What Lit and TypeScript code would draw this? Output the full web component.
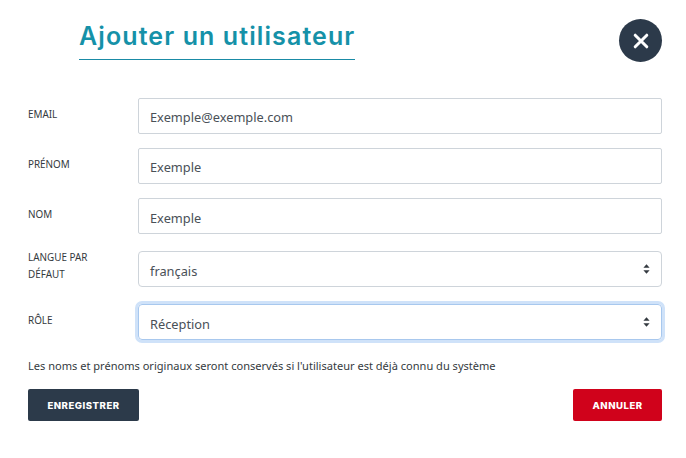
import { LitElement, html, css } from "lit";
import { customElement } from "lit/decorators.js";

const CHEV = html`<svg class="chev" width="7" height="10" viewBox="0 0 7 10"><path d="M3.5 0.3 L6.6 3.8 H0.4 Z M3.5 9.7 L0.4 6.2 H6.6 Z" fill="#343a40"/></svg>`;

@customElement("app-root")
export class AppRoot extends LitElement {
  static styles = css`
    :host { display: block; width: 686px; height: 458px; background: #fff; box-sizing: border-box; padding: 0 24px 0 28px; font-family: "Noto Sans", sans-serif; color: #343a40; overflow: hidden; }
    .head { display: flex; justify-content: space-between; height: 98px; }
    .title { margin: 19px 0 0 51px; height: 41px; box-sizing: border-box; width: 276px; border-bottom: 1px solid #1a8ba6; font-family: "Inter", sans-serif; font-weight: 600; font-size: 25px; letter-spacing: 1.1px; line-height: 34px; color: #1591a8; white-space: nowrap; }
    .close { margin-top: 19px; width: 43px; height: 43px; border-radius: 50%; background: #2c3a4a; border: 0; padding: 0; display: flex; align-items: center; justify-content: center; }
    .row { display: flex; align-items: center; margin-bottom: 14px; }
    .label { width: 110px; flex: none; font-size: 9.9px; line-height: 17px; padding-bottom: 3px; color: #343a40; box-sizing: border-box; padding-right: 20px; }
    .label.low { padding-bottom: 1px; }
    .field { flex: 1; height: 36px; box-sizing: border-box; border: 1px solid #ced4da; border-radius: 2px; padding: 2px 11px 0; font-size: 12.8px; color: #495057; display: flex; align-items: center; justify-content: space-between; }
    .field.low { padding-top: 4px; }
    .select { margin-top: 3px; border-radius: 4px; padding-top: 4px; }
    .chev { margin-top: -5px; }
    .focus { border-color: #a8c8ee; box-shadow: 0 0 0 3px #cfe2f9; }
    .note { margin: 18px 0 0; font-size: 11.05px; line-height: 16px; color: #343a40; white-space: nowrap; }
    .actions { display: flex; justify-content: space-between; margin-top: 15px; }
    .btn { height: 32px; border: 0; border-radius: 2px; color: #fff; font-family: "Inter", sans-serif; font-weight: 800; font-size: 9.6px; letter-spacing: 0.5px; padding: 0; display: flex; align-items: center; justify-content: center; }
    .save { width: 111px; background: #2c3a4a; }
    .cancel { width: 89px; background: #d0021b; }
  `;

  render() {
    return html`
      <div class="head">
        <div class="title">Ajouter un utilisateur</div>
        <button class="close" aria-label="Fermer">
          <svg width="16" height="16" viewBox="0 0 16 16"><path d="M2.2 2.2 L13.8 13.8 M13.8 2.2 L2.2 13.8" stroke="#fff" stroke-width="3" stroke-linecap="round"/></svg>
        </button>
      </div>
      <div class="row"><div class="label">EMAIL</div><div class="field">Exemple@exemple.com</div></div>
      <div class="row"><div class="label">PRÉNOM</div><div class="field">Exemple</div></div>
      <div class="row"><div class="label">NOM</div><div class="field low">Exemple</div></div>
      <div class="row"><div class="label">LANGUE PAR DÉFAUT</div><div class="field select">français ${CHEV}</div></div>
      <div class="row"><div class="label low">RÔLE</div><div class="field select focus">Réception ${CHEV}</div></div>
      <p class="note">Les noms et prénoms originaux seront conservés si l'utilisateur est déjà connu du système</p>
      <div class="actions">
        <button class="btn save">ENREGISTRER</button>
        <button class="btn cancel">ANNULER</button>
      </div>
    `;
  }
}
